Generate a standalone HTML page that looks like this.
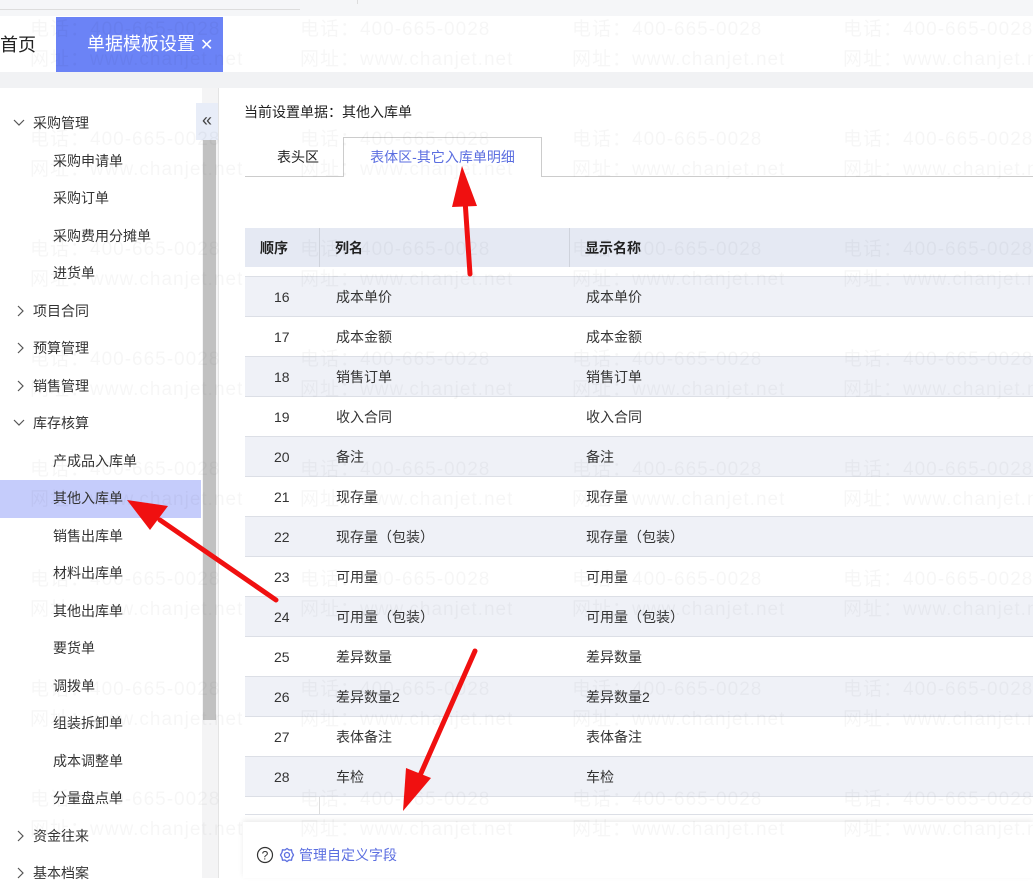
<!DOCTYPE html>
<html><head><meta charset="utf-8">
<style>
*{margin:0;padding:0;box-sizing:border-box}
body{width:1033px;height:878px;overflow:hidden;position:relative;background:#fff;font-family:"Liberation Sans","Noto Sans CJK SC",sans-serif;color:#333;font-size:14px}
.abs{position:absolute}
.side div.it{position:absolute;left:53px;font-size:14px;line-height:20px;color:#333;white-space:nowrap}
.side div.grp{position:absolute;left:33px;font-size:14px;line-height:20px;color:#333;white-space:nowrap}
.row{position:absolute;left:245px;width:788px;height:40px;border-bottom:1px solid #dcdfe6;font-size:14px;color:#333}
.row span{position:absolute;top:10px;line-height:20px}
.wm{position:absolute;font-size:19px;color:rgba(0,0,0,0.035);white-space:nowrap;line-height:22px;letter-spacing:1px}
</style></head><body>
<div class="abs" style="left:0;top:0;width:1033px;height:16px;background:#f5f6f8"></div>
<div class="abs" style="left:0;top:9px;width:300px;height:1px;background:#ddd"></div>
<div class="abs" style="left:357px;top:0;width:1px;height:4px;background:#ddd"></div>
<div class="abs" style="left:0;top:16px;width:1033px;height:56px;background:#fff"></div>
<div class="abs" style="left:0;top:33px;font-size:18px;line-height:24px;color:#222">首页</div>
<div class="abs" style="left:56px;top:17px;width:167px;height:55px;background:#6b83f6;color:#fff;font-size:18px;line-height:55px;padding-left:31px">单据模板设置 <span style="font-size:16px">✕</span></div>
<div class="abs" style="left:0;top:72px;width:1033px;height:16px;background:#f1f2f4"></div>
<div class="side">
<div class="abs" style="left:0;top:480px;width:201px;height:38px;background:#c5ccfb"></div>
<svg class="abs" style="left:12px;top:117px" width="14" height="12"><path d="M2 3 L7 8 L12 3" fill="none" stroke="#555" stroke-width="1.2"/></svg>
<div class="grp" style="top:113px">采购管理</div>
<div class="it" style="top:151px">采购申请单</div>
<div class="it" style="top:188px">采购订单</div>
<div class="it" style="top:226px">采购费用分摊单</div>
<div class="it" style="top:263px">进货单</div>
<svg class="abs" style="left:14px;top:304px" width="12" height="14"><path d="M4 2 L9 7 L4 12" fill="none" stroke="#555" stroke-width="1.2"/></svg>
<div class="grp" style="top:301px">项目合同</div>
<svg class="abs" style="left:14px;top:341px" width="12" height="14"><path d="M4 2 L9 7 L4 12" fill="none" stroke="#555" stroke-width="1.2"/></svg>
<div class="grp" style="top:338px">预算管理</div>
<svg class="abs" style="left:14px;top:379px" width="12" height="14"><path d="M4 2 L9 7 L4 12" fill="none" stroke="#555" stroke-width="1.2"/></svg>
<div class="grp" style="top:376px">销售管理</div>
<svg class="abs" style="left:12px;top:417px" width="14" height="12"><path d="M2 3 L7 8 L12 3" fill="none" stroke="#555" stroke-width="1.2"/></svg>
<div class="grp" style="top:413px">库存核算</div>
<div class="it" style="top:451px">产成品入库单</div>
<div class="it" style="top:488px">其他入库单</div>
<div class="it" style="top:526px">销售出库单</div>
<div class="it" style="top:563px">材料出库单</div>
<div class="it" style="top:601px">其他出库单</div>
<div class="it" style="top:638px">要货单</div>
<div class="it" style="top:676px">调拨单</div>
<div class="it" style="top:713px">组装拆卸单</div>
<div class="it" style="top:751px">成本调整单</div>
<div class="it" style="top:788px">分量盘点单</div>
<svg class="abs" style="left:14px;top:829px" width="12" height="14"><path d="M4 2 L9 7 L4 12" fill="none" stroke="#555" stroke-width="1.2"/></svg>
<div class="grp" style="top:826px">资金往来</div>
<svg class="abs" style="left:14px;top:866px" width="12" height="14"><path d="M4 2 L9 7 L4 12" fill="none" stroke="#555" stroke-width="1.2"/></svg>
<div class="grp" style="top:863px">基本档案</div>
</div>
<div class="abs" style="left:202px;top:88px;width:16px;height:790px;background:#f4f4f5"></div>
<div class="abs" style="left:203px;top:140px;width:13px;height:580px;background:#c1c1c1"></div>
<div class="abs" style="left:196px;top:103px;width:22px;height:37px;background:#e8edf8;color:#444;font-size:18px;line-height:34px;text-align:center">«</div>
<div class="abs" style="left:218px;top:88px;width:1px;height:790px;background:#e4e4e4"></div>
<div class="abs" style="left:244px;top:102px;font-size:14px;line-height:20px;color:#222">当前设置单据：其他入库单</div>
<div class="abs" style="left:245px;top:176px;width:98px;height:1px;background:#ccc"></div>
<div class="abs" style="left:541px;top:176px;width:492px;height:1px;background:#ccc"></div>
<div class="abs" style="left:277px;top:147px;font-size:14px;line-height:20px;color:#222">表头区</div>
<div class="abs" style="left:343px;top:137px;width:199px;height:40px;border:1px solid #ccc;border-bottom:none;background:#fff;color:#5b6ee0;font-size:14px;line-height:38px;text-align:center">表体区-其它入库单明细</div>
<div class="abs" style="left:245px;top:228px;width:788px;height:39px;background:#e5e9f3;font-weight:bold;font-size:14px;color:#222">
<span class="abs" style="left:15px;top:10px">顺序</span>
<span class="abs" style="left:90px;top:10px">列名</span>
<span class="abs" style="left:340px;top:10px">显示名称</span>
<div class="abs" style="left:74px;top:0;width:1px;height:39px;background:#cfd3dc"></div>
<div class="abs" style="left:324px;top:0;width:1px;height:39px;background:#cfd3dc"></div>
</div>
<div class="abs" style="left:245px;top:276px;width:788px;height:1px;background:#dcdfe6"></div>
<div class="row" style="top:277px;background:#eff1f7"><span style="left:29px">16</span><span style="left:91px">成本单价</span><span style="left:341px">成本单价</span></div>
<div class="row" style="top:317px"><span style="left:29px">17</span><span style="left:91px">成本金额</span><span style="left:341px">成本金额</span></div>
<div class="row" style="top:357px;background:#eff1f7"><span style="left:29px">18</span><span style="left:91px">销售订单</span><span style="left:341px">销售订单</span></div>
<div class="row" style="top:397px"><span style="left:29px">19</span><span style="left:91px">收入合同</span><span style="left:341px">收入合同</span></div>
<div class="row" style="top:437px;background:#eff1f7"><span style="left:29px">20</span><span style="left:91px">备注</span><span style="left:341px">备注</span></div>
<div class="row" style="top:477px"><span style="left:29px">21</span><span style="left:91px">现存量</span><span style="left:341px">现存量</span></div>
<div class="row" style="top:517px;background:#eff1f7"><span style="left:29px">22</span><span style="left:91px">现存量（包装）</span><span style="left:341px">现存量（包装）</span></div>
<div class="row" style="top:557px"><span style="left:29px">23</span><span style="left:91px">可用量</span><span style="left:341px">可用量</span></div>
<div class="row" style="top:597px;background:#eff1f7"><span style="left:29px">24</span><span style="left:91px">可用量（包装）</span><span style="left:341px">可用量（包装）</span></div>
<div class="row" style="top:637px"><span style="left:29px">25</span><span style="left:91px">差异数量</span><span style="left:341px">差异数量</span></div>
<div class="row" style="top:677px;background:#eff1f7"><span style="left:29px">26</span><span style="left:91px">差异数量2</span><span style="left:341px">差异数量2</span></div>
<div class="row" style="top:717px"><span style="left:29px">27</span><span style="left:91px">表体备注</span><span style="left:341px">表体备注</span></div>
<div class="row" style="top:757px;background:#eff1f7"><span style="left:29px">28</span><span style="left:91px">车检</span><span style="left:341px">车检</span></div>
<div class="abs" style="left:319px;top:797px;width:1px;height:17px;background:#ddd"></div>
<div class="abs" style="left:245px;top:814px;width:788px;height:1px;background:#dcdfe6"></div>
<div class="abs" style="left:243px;top:822px;width:790px;height:56px;background:#fff;box-shadow:0 -2px 5px rgba(0,0,0,0.08)"></div>
<svg class="abs" style="left:256px;top:846px" width="18" height="18"><circle cx="9" cy="9" r="7.5" fill="none" stroke="#333" stroke-width="1.2"/><text x="9" y="13.5" font-size="12" text-anchor="middle" fill="#333" font-family="Liberation Sans">?</text></svg>
<svg class="abs" style="left:279px;top:847px" width="16" height="16"><circle cx="8" cy="8" r="2.5" fill="none" stroke="#5b6ee0" stroke-width="1.3"/><path d="M8 1.5 L10 3 L12.5 2.8 L13 5.3 L14.5 8 L13 10.7 L12.5 13.2 L10 13 L8 14.5 L6 13 L3.5 13.2 L3 10.7 L1.5 8 L3 5.3 L3.5 2.8 L6 3 Z" fill="none" stroke="#5b6ee0" stroke-width="1.3"/></svg>
<div class="abs" style="left:299px;top:845px;color:#5b6ee0;font-size:14px;line-height:20px">管理自定义字段</div>
<div class="wm" style="left:30px;top:19px">电话：400-665-0028</div><div class="wm" style="left:30px;top:49px">网址：www.chanjet.net</div>
<div class="wm" style="left:300px;top:19px">电话：400-665-0028</div><div class="wm" style="left:300px;top:49px">网址：www.chanjet.net</div>
<div class="wm" style="left:572px;top:19px">电话：400-665-0028</div><div class="wm" style="left:572px;top:49px">网址：www.chanjet.net</div>
<div class="wm" style="left:843px;top:19px">电话：400-665-0028</div><div class="wm" style="left:843px;top:49px">网址：www.chanjet.net</div>
<div class="wm" style="left:30px;top:129px">电话：400-665-0028</div><div class="wm" style="left:30px;top:159px">网址：www.chanjet.net</div>
<div class="wm" style="left:300px;top:129px">电话：400-665-0028</div><div class="wm" style="left:300px;top:159px">网址：www.chanjet.net</div>
<div class="wm" style="left:572px;top:129px">电话：400-665-0028</div><div class="wm" style="left:572px;top:159px">网址：www.chanjet.net</div>
<div class="wm" style="left:843px;top:129px">电话：400-665-0028</div><div class="wm" style="left:843px;top:159px">网址：www.chanjet.net</div>
<div class="wm" style="left:30px;top:239px">电话：400-665-0028</div><div class="wm" style="left:30px;top:269px">网址：www.chanjet.net</div>
<div class="wm" style="left:300px;top:239px">电话：400-665-0028</div><div class="wm" style="left:300px;top:269px">网址：www.chanjet.net</div>
<div class="wm" style="left:572px;top:239px">电话：400-665-0028</div><div class="wm" style="left:572px;top:269px">网址：www.chanjet.net</div>
<div class="wm" style="left:843px;top:239px">电话：400-665-0028</div><div class="wm" style="left:843px;top:269px">网址：www.chanjet.net</div>
<div class="wm" style="left:30px;top:349px">电话：400-665-0028</div><div class="wm" style="left:30px;top:379px">网址：www.chanjet.net</div>
<div class="wm" style="left:300px;top:349px">电话：400-665-0028</div><div class="wm" style="left:300px;top:379px">网址：www.chanjet.net</div>
<div class="wm" style="left:572px;top:349px">电话：400-665-0028</div><div class="wm" style="left:572px;top:379px">网址：www.chanjet.net</div>
<div class="wm" style="left:843px;top:349px">电话：400-665-0028</div><div class="wm" style="left:843px;top:379px">网址：www.chanjet.net</div>
<div class="wm" style="left:30px;top:459px">电话：400-665-0028</div><div class="wm" style="left:30px;top:489px">网址：www.chanjet.net</div>
<div class="wm" style="left:300px;top:459px">电话：400-665-0028</div><div class="wm" style="left:300px;top:489px">网址：www.chanjet.net</div>
<div class="wm" style="left:572px;top:459px">电话：400-665-0028</div><div class="wm" style="left:572px;top:489px">网址：www.chanjet.net</div>
<div class="wm" style="left:843px;top:459px">电话：400-665-0028</div><div class="wm" style="left:843px;top:489px">网址：www.chanjet.net</div>
<div class="wm" style="left:30px;top:569px">电话：400-665-0028</div><div class="wm" style="left:30px;top:599px">网址：www.chanjet.net</div>
<div class="wm" style="left:300px;top:569px">电话：400-665-0028</div><div class="wm" style="left:300px;top:599px">网址：www.chanjet.net</div>
<div class="wm" style="left:572px;top:569px">电话：400-665-0028</div><div class="wm" style="left:572px;top:599px">网址：www.chanjet.net</div>
<div class="wm" style="left:843px;top:569px">电话：400-665-0028</div><div class="wm" style="left:843px;top:599px">网址：www.chanjet.net</div>
<div class="wm" style="left:30px;top:679px">电话：400-665-0028</div><div class="wm" style="left:30px;top:709px">网址：www.chanjet.net</div>
<div class="wm" style="left:300px;top:679px">电话：400-665-0028</div><div class="wm" style="left:300px;top:709px">网址：www.chanjet.net</div>
<div class="wm" style="left:572px;top:679px">电话：400-665-0028</div><div class="wm" style="left:572px;top:709px">网址：www.chanjet.net</div>
<div class="wm" style="left:843px;top:679px">电话：400-665-0028</div><div class="wm" style="left:843px;top:709px">网址：www.chanjet.net</div>
<div class="wm" style="left:30px;top:789px">电话：400-665-0028</div><div class="wm" style="left:30px;top:819px">网址：www.chanjet.net</div>
<div class="wm" style="left:300px;top:789px">电话：400-665-0028</div><div class="wm" style="left:300px;top:819px">网址：www.chanjet.net</div>
<div class="wm" style="left:572px;top:789px">电话：400-665-0028</div><div class="wm" style="left:572px;top:819px">网址：www.chanjet.net</div>
<div class="wm" style="left:843px;top:789px">电话：400-665-0028</div><div class="wm" style="left:843px;top:819px">网址：www.chanjet.net</div>
<svg class="abs" style="left:0;top:0" width="1033" height="878">
<g stroke="#f01010" stroke-width="5" stroke-linecap="round" fill="#f01010">
<line x1="470" y1="274" x2="465" y2="200"/>
<polygon points="462,166 452,207 477,206" stroke="none"/>
<line x1="276" y1="600" x2="160" y2="520"/>
<polygon points="127,500 168,506 150,530" stroke="none"/>
<line x1="475" y1="651" x2="418" y2="780"/>
<polygon points="403,811 406,768 431,778" stroke="none"/>
</g>
</svg>
</body></html>
